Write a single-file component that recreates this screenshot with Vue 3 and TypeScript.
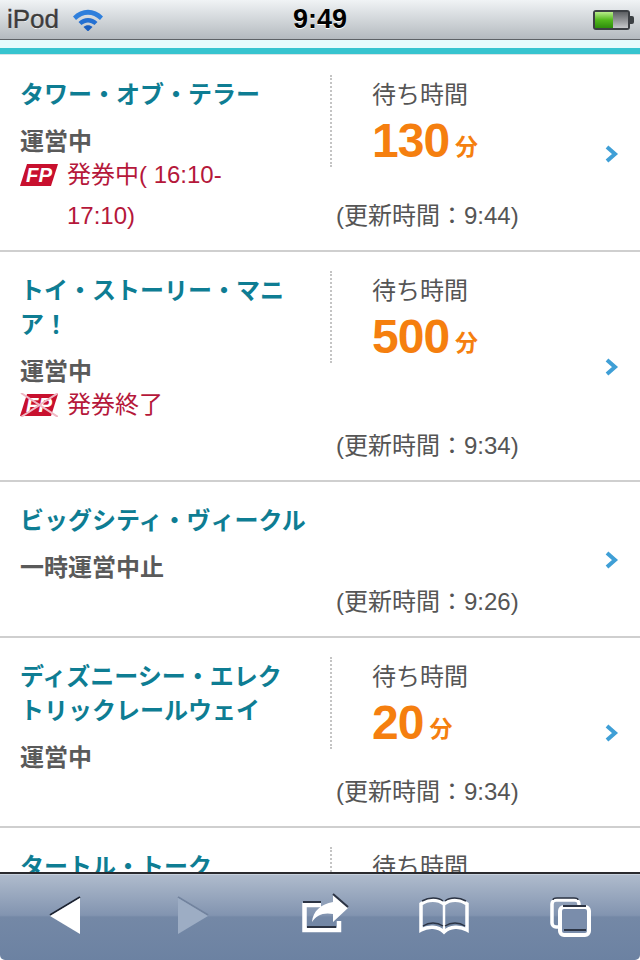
<template>
  <div class="screen">
    <header class="status">
      <div class="status__left">
        <span class="status__carrier">iPod</span>
        <svg class="status__wifi" width="32" height="24" viewBox="0 0 32 24">
          <path d="M1 9.5 C9.5 0.5 22.5 0.5 31 9.5 L28 13 C20.5 6 11.5 6 4 13 Z" fill="#2f7fdc" />
          <path d="M6.5 15 C12 9.5 20 9.5 25.5 15 L22.5 18 C18.5 14.5 13.5 14.5 9.5 18 Z" fill="#2470d2" />
          <path d="M11.5 20 C14 17.6 18 17.6 20.5 20 L16 24.5 Z" fill="#1b5fc0" />
        </svg>
      </div>
      <span class="status__time">9:49</span>
      <svg class="status__battery" width="44" height="22" viewBox="0 0 44 22">
        <defs>
          <linearGradient id="charge" x1="0" y1="0" x2="0" y2="1">
            <stop offset="0" stop-color="#b8ec8a" />
            <stop offset="0.5" stop-color="#52b81c" />
            <stop offset="1" stop-color="#2e8d0c" />
          </linearGradient>
          <linearGradient id="empty" x1="0" y1="0" x2="0" y2="1">
            <stop offset="0" stop-color="#5c5f62" />
            <stop offset="1" stop-color="#c6c8ca" />
          </linearGradient>
        </defs>
        <rect x="1" y="1" width="37" height="20" rx="3" fill="#3c4044" />
        <rect x="3" y="3" width="33" height="16" fill="url(#empty)" />
        <rect x="3" y="3" width="18" height="16" fill="url(#charge)" />
        <path d="M38 7 h2 a2 2 0 0 1 2 2 v4 a2 2 0 0 1 -2 2 h-2 Z" fill="#3c4044" />
      </svg>
    </header>

    <div class="stripe"></div>

    <main class="list">
      <section v-for="item in attractions" :key="item.name" class="row">
        <div class="row__left">
          <h2 class="row__title">{{ item.name }}</h2>
          <p class="row__state">{{ item.state }}</p>
          <div v-if="item.fp" class="fp">
            <svg class="fp__icon" width="38" height="24" viewBox="0 0 38 24">
              <path d="M7 1 H38 L31 23 H0 Z" fill="#c8102e" />
              <text x="6" y="19" textLength="26" lengthAdjust="spacingAndGlyphs" class="fp__mark">FP</text>
              <path v-if="item.fpDone" d="M1 0 L38 24 M38 0 L1 24" stroke="#f0b8c4" stroke-width="2" />
            </svg>
            <div class="fp__text">
              <span v-for="line in item.fp" :key="line">{{ line }}</span>
            </div>
          </div>
        </div>

        <div v-if="item.wait" class="wait">
          <p class="wait__label">待ち時間</p>
          <p class="wait__value">{{ item.wait }}<span class="wait__unit">分</span></p>
        </div>

        <p class="row__updated">(更新時間：{{ item.updated }})</p>

        <svg class="row__chevron" width="14" height="18" viewBox="0 0 14 18">
          <path d="M2 2 L10 9 L2 16" fill="none" stroke="#3f9fd6" stroke-width="4" />
        </svg>
      </section>

      <section class="row">
        <div class="row__left">
          <h2 class="row__title">タートル・トーク</h2>
        </div>
        <div class="wait">
          <p class="wait__label">待ち時間</p>
        </div>
      </section>
    </main>

    <nav class="toolbar">
      <svg width="128" height="86" viewBox="0 0 128 86">
        <path d="M50 41 L80 23" stroke="#1c2230" stroke-width="2" />
        <polygon points="50,42 80,24 80,60" fill="#fff" />
      </svg>
      <svg width="128" height="86" viewBox="0 0 128 86">
        <path d="M50 23 L80 41" stroke="#72839e" stroke-width="2" />
        <polygon points="50,24 80,42 50,60" fill="#9dadc4" />
      </svg>
      <svg width="128" height="86" viewBox="0 0 128 86">
        <path d="M65 31 H48.5 V56 H83 V47" fill="none" stroke="#fff" stroke-width="4.5" />
        <path d="M47 28 H65 M51 53 H80" stroke="#2c3444" stroke-width="2" />
        <path d="M77 21 L92 34 L77 48 V40 C68 38 60 41 56 48 C57 37 65 30 77 28 Z" fill="#fff" />
        <path d="M77 20 L92 33" stroke="#2c3444" stroke-width="2" />
      </svg>
      <svg width="128" height="86" viewBox="0 0 128 86">
        <path d="M37 30 C44 25 54 25 60 30 C66 25 76 25 83 30 V56 C76 52 66 52 60 58 C54 52 44 52 37 56 Z" fill="none" stroke="#fff" stroke-width="3.5" />
        <path d="M60 30 V56" stroke="#fff" stroke-width="2.5" />
        <path d="M39 52 C45 48 53 48 59 52 M61 52 C67 48 75 48 81 52 M38 27 C45 23 54 23 59 27 M61 27 C66 23 75 23 82 27" fill="none" stroke="#2c3444" stroke-width="1.5" />
      </svg>
      <svg width="128" height="86" viewBox="0 0 128 86">
        <rect x="40" y="26" width="27" height="27" rx="4" fill="none" stroke="#fff" stroke-width="3.5" />
        <path d="M41 26 Q41 24 45 24 H62 Q66 24 66 26" fill="none" stroke="#2c3444" stroke-width="1.5" />
        <rect x="48" y="33" width="29" height="28" rx="4" fill="#7a8dab" stroke="#fff" stroke-width="4" />
        <path d="M51 32 H74 M52 56 H74" stroke="#2c3444" stroke-width="2" />
      </svg>
    </nav>
  </div>
</template>

<script setup lang="ts">
interface Attraction {
  name: string
  state: string
  updated: string
  wait?: number
  fp?: string[]
  fpDone?: boolean
}

const attractions: Attraction[] = [
  { name: 'タワー・オブ・テラー', state: '運営中', updated: '9:44', wait: 130, fp: ['発券中( 16:10-', '17:10)'] },
  { name: 'トイ・ストーリー・マニア！', state: '運営中', updated: '9:34', wait: 500, fp: ['発券終了'], fpDone: true },
  { name: 'ビッグシティ・ヴィークル', state: '一時運営中止', updated: '9:26' },
  { name: 'ディズニーシー・エレク\nトリックレールウェイ', state: '運営中', updated: '9:34', wait: 20 }
]
</script>

<style>
html,
body {
  margin: 0;
  background: #000;
}
</style>

<style scoped>
.screen {
  display: flex;
  flex-direction: column;
  width: 640px;
  height: 960px;
  overflow: hidden;
  background: #fff;
  font-family: "Liberation Sans", "Noto Sans CJK JP", sans-serif;
}

p,
h2 {
  margin: 0;
}

.status {
  position: relative;
  flex: none;
  display: flex;
  justify-content: space-between;
  align-items: center;
  height: 39px;
  padding: 0 4px 0 7px;
  background: linear-gradient(#f0f3f5, #b4babf);
  border-bottom: 1px solid #5e6266;
}

.status__left {
  display: flex;
  align-items: center;
  gap: 13px;
}

.status__carrier {
  font-size: 26px;
  color: #3c3c3c;
  -webkit-text-stroke: 0.4px #3c3c3c;
  text-shadow: 0 1px 0 #fff;
}

.status__wifi {
  margin-top: -1px;
}

.status__time {
  position: absolute;
  left: 0;
  right: 0;
  text-align: center;
  font-size: 27px;
  font-weight: bold;
  color: #000;
  text-shadow: 0 1px 0 #fff;
}

.stripe {
  flex: none;
  height: 8px;
  background: #e6fbfc;
  border-bottom: 6px solid #37c4cf;
  box-shadow: 0 1px 0 #d8e4e6;
}

.list {
  flex: 1;
  min-height: 0;
  overflow: hidden;
  margin-top: 2px;
}

.row {
  position: relative;
  display: grid;
  grid-template-columns: 310px 1fr;
  padding: 19px 0 17px 20px;
  border-bottom: 2px solid #cfcfcf;
}

.row__left {
  grid-column: 1;
  grid-row: 1;
  padding: 3px 20px 0 0;
}

.row__title {
  font-size: 24px;
  line-height: 34px;
  font-weight: 700;
  color: #0e7d93;
  white-space: pre-line;
}

.row__state {
  margin-top: 13px;
  font-size: 24px;
  line-height: 34px;
  font-weight: 700;
  color: #5a5a5a;
}

.fp {
  display: flex;
  gap: 9px;
  height: 45px;
  margin-top: -5px;
  font-size: 24px;
  line-height: 41px;
  color: #b5173a;
}

.fp__icon {
  flex: none;
  margin-top: 9px;
}

.fp__mark {
  font: italic bold 21px "Liberation Sans", sans-serif;
  fill: #fff;
}

.fp__text span {
  display: block;
  white-space: nowrap;
}

.wait {
  grid-column: 2;
  grid-row: 1;
  align-self: start;
  box-sizing: border-box;
  height: 92px;
  padding-left: 40px;
  border-left: 2px dotted #c4c4c4;
}

.wait__label {
  padding-top: 3px;
  font-size: 24px;
  line-height: 34px;
  color: #555;
}

.wait__value {
  margin-top: 1px;
  font-size: 48px;
  line-height: 56px;
  font-weight: bold;
  letter-spacing: -1px;
  color: #f57f0f;
}

.wait__unit {
  margin-left: 6px;
  font-size: 23px;
  letter-spacing: 0;
  vertical-align: 2px;
}

.row__updated {
  grid-column: 2;
  grid-row: 2;
  margin-left: 6px;
  font-size: 24px;
  line-height: 34px;
  color: #555;
  white-space: nowrap;
}

.row__chevron {
  position: absolute;
  right: 21px;
  top: 50%;
  margin-top: -8px;
}

.toolbar {
  flex: none;
  display: flex;
  height: 86px;
  border-top: 2px solid #2a2a2e;
  background: linear-gradient(#b0bccd 0, #8294b0 48%, #7488a6 50%, #6c82a2 100%);
  box-shadow: inset 0 1px 0 #c6d0dc;
  border-radius: 0 0 5px 5px;
}

.toolbar svg {
  flex: none;
}
</style>
